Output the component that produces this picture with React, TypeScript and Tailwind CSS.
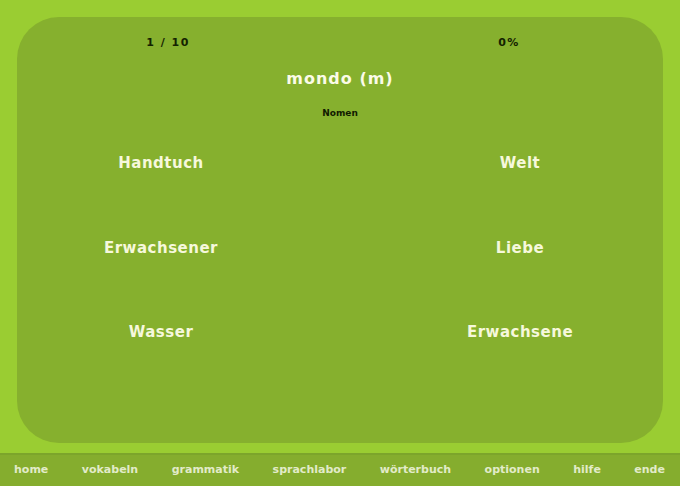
export default function App() {
  const pairs = [
    ["Handtuch", "Welt"],
    ["Erwachsener", "Liebe"],
    ["Wasser", "Erwachsene"],
  ];
  const nav = ["home", "vokabeln", "grammatik", "sprachlabor", "wörterbuch", "optionen", "hilfe", "ende"];

  return (
    <div
      className="flex h-[486px] w-[680px] flex-col bg-[#9acd32]"
      style={{ fontFamily: '"DejaVu Sans", Verdana, sans-serif' }}
    >
      <div className="px-[17px] pt-[17px]">
        {/* Main panel */}
        <div className="flex h-[426px] flex-col rounded-[42px] bg-[#86b02e]">
          <div className="flex pt-[18px] text-[11px] font-bold tracking-[1.5px] text-[#142200]">
            <div className="w-[302px] text-center">1 / 10</div>
            <div className="w-[344px] pl-[36px] text-center">0%</div>
          </div>
          <div className="mt-[15px] text-center text-[16px] font-bold tracking-[1px] text-[#fbfbe8]">mondo (m)</div>
          <div className="mt-[16px] text-center text-[9px] font-bold text-[#111a00]">Nomen</div>

          <div className="mt-[32px] flex flex-col gap-[62px]">
            {pairs.map(([a, b]) => (
              <div key={a} className="flex text-[15px] font-bold tracking-[0.5px] text-[#f6f8dc]">
                <div className="w-[288px] text-center">{a}</div>
                <div className="w-[358px] pl-[72px] text-center">{b}</div>
              </div>
            ))}
          </div>
        </div>
      </div>

      {/* Bottom navigation */}
      <div className="mt-[10px] flex h-[33px] items-center justify-between border-t-2 border-[#7ca52b] bg-[#85ad2e] pl-[14px] pr-[15px] text-[11px] font-bold text-[#e2ebc9]">
        {nav.map((n) => (
          <span key={n}>{n}</span>
        ))}
      </div>
    </div>
  );
}
